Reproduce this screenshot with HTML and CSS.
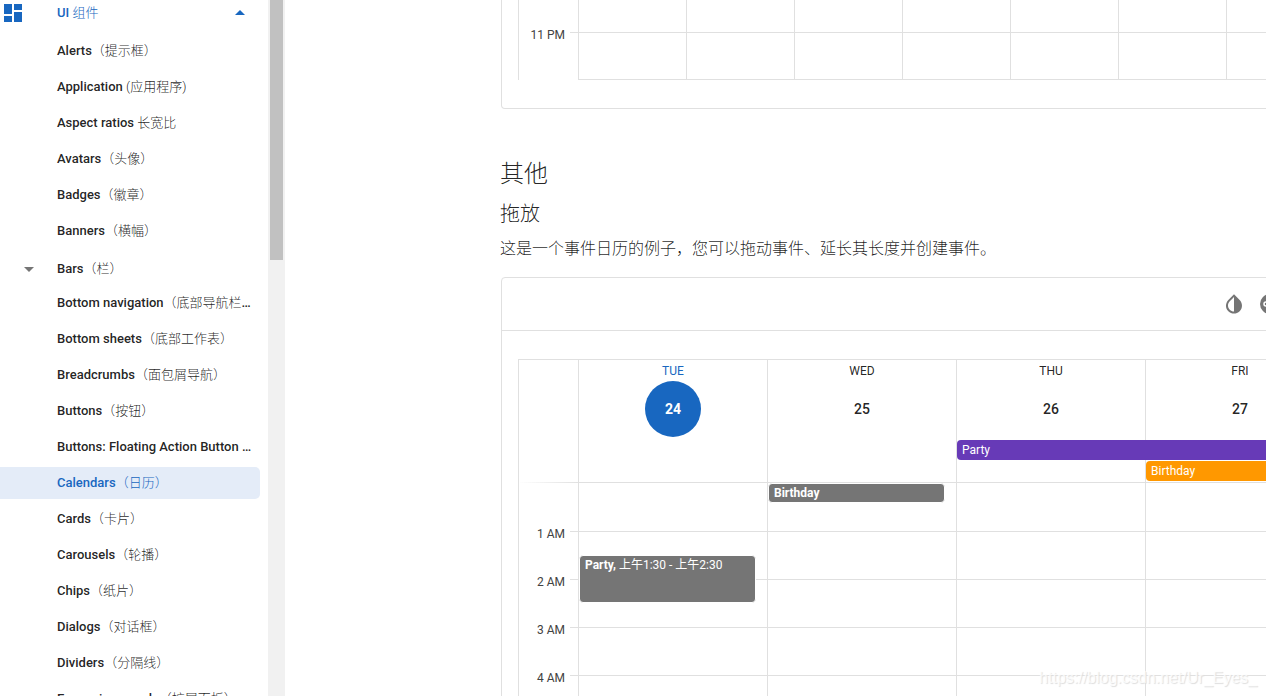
FILE: index.html
```html
<!DOCTYPE html>
<html lang="zh-CN">
<head>
<meta charset="utf-8">
<title>Calendars（日历）</title>
<link rel="stylesheet" href="styles.css">
</head>
<body>
<aside class="sidebar">
  <nav class="nav">
    <button class="nav-header" type="button">
      <svg class="nav-logo" viewBox="0 0 18 18" aria-hidden="true"><path d="M0 0h8v10H0zM0 12h8v6H0zM10 0h8v6h-8zM10 8h8v10h-8z"/></svg>
      <span class="nav-title">UI <span class="zh">组件</span></span>
      <svg class="caret" viewBox="0 0 10 6" aria-hidden="true"><path d="M0 5l5-5 5 5z"/></svg>
    </button>
    <ul class="nav-list">
      <li><a class="nav-item" href="#">Alerts<span class="zh">（提示框）</span></a></li>
      <li><a class="nav-item" href="#">Application <span class="zh">(应用程序)</span></a></li>
      <li><a class="nav-item" href="#">Aspect ratios <span class="zh">长宽比</span></a></li>
      <li><a class="nav-item" href="#">Avatars<span class="zh">（头像）</span></a></li>
      <li><a class="nav-item" href="#">Badges<span class="zh">（徽章）</span></a></li>
      <li><a class="nav-item" href="#">Banners<span class="zh">（横幅）</span></a></li>
      <li><button class="nav-group" type="button">
        <svg class="caret" viewBox="0 -1 10 6" aria-hidden="true"><path d="M0 0l5 5 5-5z"/></svg>
        <span>Bars<span class="zh">（栏）</span></span>
      </button></li>
      <li><a class="nav-item" href="#">Bottom navigation<span class="zh">（底部导航栏）</span></a></li>
      <li><a class="nav-item" href="#">Bottom sheets<span class="zh">（底部工作表）</span></a></li>
      <li><a class="nav-item" href="#">Breadcrumbs<span class="zh">（面包屑导航）</span></a></li>
      <li><a class="nav-item" href="#">Buttons<span class="zh">（按钮）</span></a></li>
      <li><a class="nav-item" href="#">Buttons: Floating Action Button <span class="zh">（浮动按钮）</span></a></li>
      <li><a class="nav-item active" href="#" aria-current="page">Calendars<span class="zh">（日历）</span></a></li>
      <li><a class="nav-item" href="#">Cards<span class="zh">（卡片）</span></a></li>
      <li><a class="nav-item" href="#">Carousels<span class="zh">（轮播）</span></a></li>
      <li><a class="nav-item" href="#">Chips<span class="zh">（纸片）</span></a></li>
      <li><a class="nav-item" href="#">Dialogs<span class="zh">（对话框）</span></a></li>
      <li><a class="nav-item" href="#">Dividers<span class="zh">（分隔线）</span></a></li>
      <li><a class="nav-item" href="#">Expansion panels<span class="zh">（扩展面板）</span></a></li>
    </ul>
  </nav>
  <div class="scrollbar"><div class="thumb"></div></div>
</aside>

<main class="main">
  <div class="content">
    <section class="card card-end">
      <div class="calendar">
        <div class="gutter">
          <div class="hour-label hour-cut"></div>
          <div class="hour-label"><span>11 PM</span></div>
        </div>
        <div class="days">
          <div class="day day-end"><div class="hour hour-cut"></div><div class="hour"></div></div>
          <div class="day day-end"><div class="hour hour-cut"></div><div class="hour"></div></div>
          <div class="day day-end"><div class="hour hour-cut"></div><div class="hour"></div></div>
          <div class="day day-end"><div class="hour hour-cut"></div><div class="hour"></div></div>
          <div class="day day-end"><div class="hour hour-cut"></div><div class="hour"></div></div>
          <div class="day day-end"><div class="hour hour-cut"></div><div class="hour"></div></div>
          <div class="day day-end"><div class="hour hour-cut"></div><div class="hour"></div></div>
        </div>
      </div>
    </section>

    <h2 class="title">其他</h2>
    <h3 class="subtitle">拖放</h3>
    <p class="text">这是一个事件日历的例子，您可以拖动事件、延长其长度并创建事件。</p>

    <section class="card">
      <div class="toolbar">
        <button class="icon-btn" type="button" aria-label="Invert colors">
          <svg viewBox="0 0 24 24"><path d="M17.66 7.93L12 2.27 6.34 7.93c-3.12 3.12-3.12 8.19 0 11.31C7.9 20.8 9.95 21.58 12 21.58s4.1-.78 5.66-2.34c3.12-3.12 3.12-8.19 0-11.31zM12 19.59c-1.6 0-3.11-.62-4.24-1.76C6.62 16.69 6 15.19 6 13.59s.62-3.11 1.76-4.24L12 5.1v14.49z"/></svg>
        </button>
        <button class="icon-btn" type="button" aria-label="Codepen">
          <svg viewBox="0 0 24 24"><circle cx="12" cy="12" r="10"/><circle class="ring" cx="8" cy="12" r="2"/><circle class="ring" cx="16" cy="12" r="2"/></svg>
        </button>
      </div>
      <div class="calendar calendar-top">
        <div class="gutter">
          <div class="gutter-head"></div>
          <div class="hour-label"></div>
          <div class="hour-label"><span>1 AM</span></div>
          <div class="hour-label"><span>2 AM</span></div>
          <div class="hour-label"><span>3 AM</span></div>
          <div class="hour-label"><span>4 AM</span></div>
        </div>
        <div class="days">
          <div class="day">
            <div class="day-head today"><div class="weekday">TUE</div><button class="date" type="button">24</button></div>
            <div class="day-body">
              <div class="hour first"></div><div class="hour"></div><div class="hour"></div><div class="hour"></div><div class="hour"></div>
              <div class="event event-party"><strong>Party,</strong> 上午1:30 - 上午2:30</div>
            </div>
          </div>
          <div class="day">
            <div class="day-head"><div class="weekday">WED</div><button class="date" type="button">25</button></div>
            <div class="day-body">
              <div class="hour first"></div><div class="hour"></div><div class="hour"></div><div class="hour"></div><div class="hour"></div>
              <div class="event event-birthday"><strong>Birthday</strong></div>
            </div>
          </div>
          <div class="day">
            <div class="day-head"><div class="weekday">THU</div><button class="date" type="button">26</button>
              <div class="all-day purple">Party</div></div>
            <div class="day-body">
              <div class="hour first"></div><div class="hour"></div><div class="hour"></div><div class="hour"></div><div class="hour"></div>
            </div>
          </div>
          <div class="day">
            <div class="day-head"><div class="weekday">FRI</div><button class="date" type="button">27</button>
              <div class="slot"></div>
              <div class="all-day orange">Birthday</div></div>
            <div class="day-body">
              <div class="hour first"></div><div class="hour"></div><div class="hour"></div><div class="hour"></div><div class="hour"></div>
            </div>
          </div>
        </div>
      </div>
    </section>
  </div>
</main>
<div class="watermark">https://blog.csdn.net/Ur_Eyes_</div>
</body>
</html>
```

FILE: styles.css
```css
* {
  box-sizing: border-box;
}

body {
  margin: 0;
  height: 100vh;
  display: flex;
  overflow: hidden;
  background: #fff;
  color: rgba(0, 0, 0, 0.87);
  font-family: Roboto, "Noto Sans CJK SC", sans-serif;
  font-size: 16px;
}

button {
  border: 0;
  padding: 0;
  background: none;
  color: inherit;
  font: inherit;
}

/* Sidebar */
.sidebar {
  flex: none;
  width: 285px;
  display: flex;
  overflow: hidden;
}

.nav {
  flex: 1;
  min-width: 0;
  padding-right: 8px;
  font-size: 13px;
  font-weight: 500;
  line-height: 16px;
}

.zh {
  font-weight: 300;
}

.nav-header {
  display: flex;
  align-items: center;
  width: 100%;
  height: 26px;
  margin-bottom: 9px;
  padding: 0 15px 0 4px;
  color: #1867c0;
}

.nav-logo {
  width: 18px;
  height: 18px;
  margin-right: 35px;
  fill: currentColor;
}

.nav-title {
  flex: 1;
  text-align: left;
}

.caret {
  width: 10px;
  height: 6px;
  fill: currentColor;
}

.nav-list {
  margin: 0;
  padding: 0;
  list-style: none;
}

.nav-item {
  display: block;
  height: 32px;
  margin-bottom: 4px;
  padding: 0 8px 0 57px;
  border-radius: 0 5px 5px 0;
  color: inherit;
  line-height: 32px;
  text-decoration: none;
  white-space: nowrap;
  overflow: hidden;
  text-overflow: ellipsis;
}

.nav-item.active {
  background: #e4ecf8;
  color: #1867c0;
}

.nav-group {
  display: flex;
  align-items: center;
  gap: 23px;
  height: 36px;
  padding-left: 24px;
}

.nav-group .caret {
  fill: #757575;
}

.scrollbar {
  width: 17px;
  padding: 0 2px;
  background: #f1f1f1;
}

.thumb {
  height: 260px;
  background: #c1c1c1;
}

/* Content */
.main {
  flex: 1;
  min-width: 0;
  padding-left: 215px;
  overflow: hidden;
}

.content {
  min-width: 853px;
}

.card {
  margin: 0 1px;
  border: 1px solid #e0e0e0;
  border-radius: 4px;
}

.card-end {
  border-top: 0;
  border-radius: 0 0 4px 4px;
  padding-bottom: 28px;
}

.title,
.subtitle,
.text {
  margin: 0;
  font-weight: 300;
}

.title {
  margin-top: 49px;
  font-size: 24px;
  line-height: 32px;
}

.subtitle {
  margin-top: 8px;
  font-size: 20px;
  line-height: 32px;
}

.text {
  margin: 7px 0 16px;
  font-size: 16px;
  line-height: 24px;
}

.toolbar {
  display: flex;
  justify-content: flex-end;
  align-items: center;
  height: 53px;
  padding-right: 63px;
  border-bottom: 1px solid #e0e0e0;
}

.icon-btn {
  display: flex;
  align-items: center;
  justify-content: center;
  width: 36px;
  height: 36px;
}

.icon-btn svg {
  width: 24px;
  height: 24px;
  fill: #757575;
}

.icon-btn .ring {
  fill: none;
  stroke: #fff;
  stroke-width: 1.5;
}

/* Calendar */
.calendar {
  display: flex;
  margin: 0 16px;
  border-left: 1px solid #e0e0e0;
}

.calendar-top {
  margin-top: 28px;
  border-top: 1px solid #e0e0e0;
}

.gutter {
  flex: none;
  width: 60px;
  border-right: 1px solid #e0e0e0;
}

.gutter-head {
  height: 123px;
  border-bottom: 1px solid;
  border-image: linear-gradient(to right, transparent, #e0e0e0) 1;
}

.hour-label {
  display: flex;
  height: 48px;
  font-size: 12px;
  line-height: 16px;
  color: #424242;
}

.hour-label span {
  flex: 1;
  margin-top: -5px;
  padding-right: 5px;
  text-align: right;
}

.hour-label:has(span)::after {
  content: "";
  width: 8px;
  height: 1px;
  background: #e0e0e0;
}

.days {
  flex: 1;
  display: flex;
}

.day {
  flex: 1;
  min-width: 0;
  border-right: 1px solid #e0e0e0;
}

.day-end {
  border-bottom: 1px solid #e0e0e0;
}

.hour {
  height: 48px;
  border-top: 1px solid #e0e0e0;
}

.day-end .hour {
  height: 47px;
}

.hour.first {
  border-top: 0;
}

.hour-label.hour-cut,
.day-end .hour-cut {
  height: 32px;
  border-top: 0;
}

.day-head {
  height: 123px;
  padding-top: 2px;
  border-bottom: 1px solid #e0e0e0;
}

.weekday {
  font-size: 12px;
  line-height: 19px;
  text-align: center;
}

.date {
  display: block;
  width: 56px;
  height: 56px;
  margin: 0 auto 3px;
  border-radius: 50%;
  font-size: 14px;
  font-weight: 500;
}

.today .weekday {
  color: #1867c0;
}

.today .date {
  background: #1867c0;
  color: #fff;
  font-weight: 700;
}

.all-day,
.slot {
  height: 20px;
  margin-bottom: 1px;
}

.all-day {
  position: relative;
  z-index: 1;
  padding-left: 5px;
  border-radius: 4px;
  color: #fff;
  font-size: 12px;
  line-height: 20px;
}

.purple {
  width: 200%;
  background: #673ab7;
}

.orange {
  background: #ff9800;
}

.day-body {
  position: relative;
}

.event {
  position: absolute;
  left: 0;
  width: 94%;
  padding-left: 5px;
  border: 1px solid #fff;
  border-radius: 4px;
  background: #757575;
  color: #fff;
  font-size: 12px;
  line-height: 18px;
  white-space: nowrap;
  overflow: hidden;
}

/* Timed events: 48px per hour */
.event-party {
  top: 72px;
  height: 48px;
}

.event-birthday {
  top: 0;
  height: 20px;
}

.watermark {
  position: absolute;
  right: 9px;
  bottom: 9px;
  color: rgba(255, 255, 255, 0.8);
  font-family: "Liberation Sans", sans-serif;
  font-size: 16px;
  line-height: 18px;
  text-shadow: 1px 1px 1px #ddd;
}
```
